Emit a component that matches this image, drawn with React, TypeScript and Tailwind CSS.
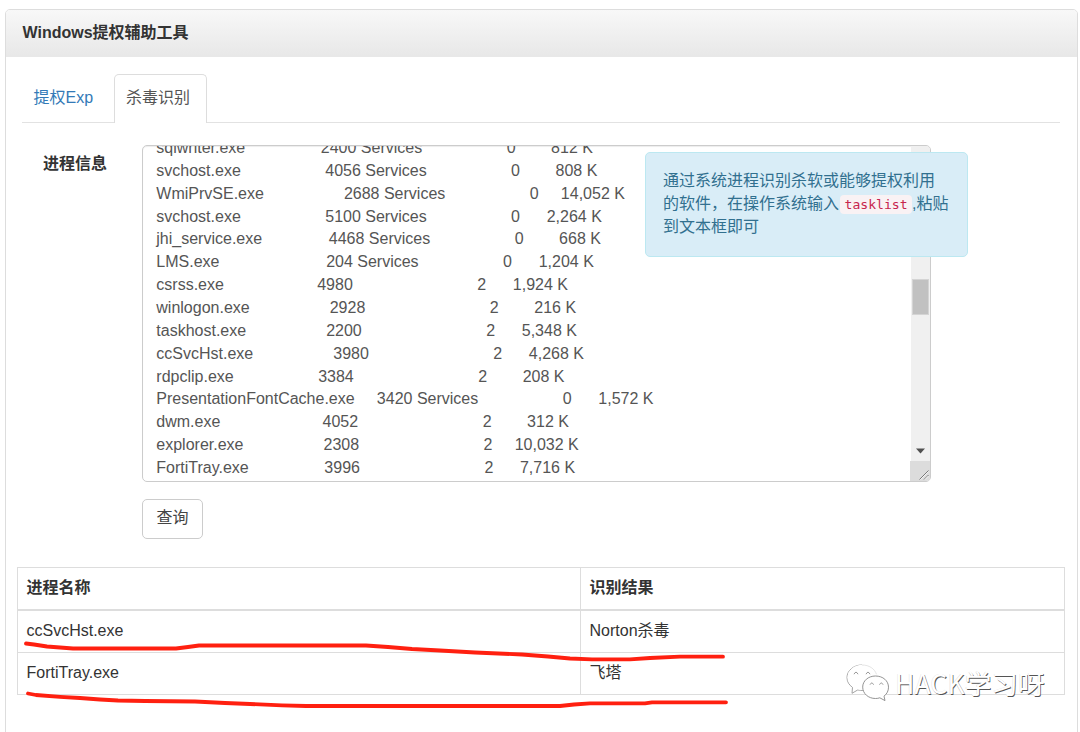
import React from 'react';

type Process = [name: string, pid: string, session: string, sessionId: string, memory: string];

const processes: Process[] = [
  ['sqlwriter.exe', '2400', 'Services', '0', '812 K'],
  ['svchost.exe', '4056', 'Services', '0', '808 K'],
  ['WmiPrvSE.exe', '2688', 'Services', '0', '14,052 K'],
  ['svchost.exe', '5100', 'Services', '0', '2,264 K'],
  ['jhi_service.exe', '4468', 'Services', '0', '668 K'],
  ['LMS.exe', '204', 'Services', '0', '1,204 K'],
  ['csrss.exe', '4980', '', '2', '1,924 K'],
  ['winlogon.exe', '2928', '', '2', '216 K'],
  ['taskhost.exe', '2200', '', '2', '5,348 K'],
  ['ccSvcHst.exe', '3980', '', '2', '4,268 K'],
  ['rdpclip.exe', '3384', '', '2', '208 K'],
  ['PresentationFontCache.exe', '3420', 'Services', '0', '1,572 K'],
  ['dwm.exe', '4052', '', '2', '312 K'],
  ['explorer.exe', '2308', '', '2', '10,032 K'],
  ['FortiTray.exe', '3996', '', '2', '7,716 K'],
];

// Column widths of the tasklist command's table output.
const formatProcess = ([name, pid, session, id, memory]: Process) =>
  [name.padEnd(25), pid.padStart(8), session.padEnd(16), id.padStart(11), memory.padStart(12)].join(' ');

const results = [
  ['ccSvcHst.exe', 'Norton杀毒'],
  ['FortiTray.exe', '飞塔'],
];

function Scrollbar() {
  return (
    <div className="flex w-[19px] shrink-0 flex-col bg-[#f0f0f0]">
      <div className="mx-px mt-[133px] h-9 border border-[#d4d4d4] bg-[#c1c1c1]" />
      <div className="flex flex-1 items-end justify-center pb-[7px]">
        <svg width="9" height="6" viewBox="0 0 9 6">
          <path d="M0 .5h9L4.5 5.5z" fill="#505050" />
        </svg>
      </div>
      <div className="-ml-px h-5 bg-[#dcdcdc]">
        <svg className="ml-auto" width="11" height="20" viewBox="0 0 11 20" fill="none" stroke="#777" strokeWidth="1">
          <path d="M.5 18.5l9-9M5 18.5l4.5-4.500" />
          <path d="M1.500 18.500l8-8M6 18.500l3.500-3.500" stroke="#f5f5f5" />
        </svg>
      </div>
    </div>
  );
}

function Notice() {
  return (
    <div className="absolute left-[503px] top-[7px] h-[105px] w-[323px] rounded-[5px] border border-[#bce8f1] bg-[#d9edf7] pl-[17px] pt-[17px] text-[#31708f]">
      <div className="whitespace-nowrap">通过系统进程识别杀软或能够提权利用</div>
      <div className="h-[22.86px] whitespace-nowrap">
        的软件，在操作系统输入
        <code className="ml-px rounded-[4px] bg-[#f9f2f4] px-[4.5px] py-[2px] font-['DejaVu_Sans_Mono',monospace] text-[13.1px] text-[#c7254e]">tasklist</code>
        ,粘贴
      </div>
      <div>到文本框即可</div>
    </div>
  );
}

function Watermark() {
  return (
    <div className="absolute left-[845px] top-[662px] flex items-center">
      <svg width="46" height="42" viewBox="0 0 46 42" fill="#fff">
        <path d="M17 3C8.500 3 2 8.700 2 15.500c0 4.300 2.200 7.500 5.500 9.900L7 31.300l5.800-3.400c2 .5 3.500.7 6 .4" stroke="#999" strokeWidth=".9" />
        <ellipse cx="17.500" cy="15.300" rx="15" ry="12.500" />
        <path d="M17 3c7 0 12.500 3.500 14.500 9.300" fill="none" stroke="#ddd" strokeWidth=".8" />
        <path d="M30.500 14c7.500 0 13 4.900 13 11.200 0 3.700-1.600 6.800-4.500 8.900l1 4.500-5.200-2.800c-1.300.5-2.600.7-4.300.7-7.300 0-12.800-5-12.800-11.400 0-6.200 5.500-11.100 12.800-11.100z" stroke="#888" strokeWidth=".9" />
        <path d="M9 12.200q2-4 4 0M21 12.200q2-4 4 0M25 22.700q1.800-3.500 3.600 0M34.500 22.700q1.800-3.500 3.600 0" fill="none" stroke="#999" strokeWidth="1" />
      </svg>
      <span className="ml-[4px] whitespace-nowrap font-['Noto_Sans_CJK_SC',sans-serif] text-[26.7px] font-normal leading-[42px] text-white [text-shadow:0.8px_0.8px_0.5px_#555,-0.3px_-0.3px_0_#ddd]">HACK学习呀</span>
    </div>
  );
}

export default function App() {
  return (
    <div className="relative h-[732px] w-[1080px] overflow-hidden bg-white pl-[5px] pt-[9px] font-['Liberation_Sans','Noto_Sans_CJK_SC',sans-serif] text-[16px] leading-[22.86px] text-[#333]">
      <div className="h-[760px] w-[1073px] rounded-[5px] border border-[#ddd] bg-white">
        <header className="flex h-[47px] items-center rounded-t-[4px] border-b border-[#e8e8e8] bg-linear-to-b from-[#f8f8f8] to-[#e8e8e8] pl-[16.5px] font-bold">
          Windows提权辅助工具
        </header>
        <nav className="ml-4 mr-[17px] mt-[17px] flex h-[49px] border-b border-[#e2e2e2]">
          <a className="w-[92px] pl-[11.5px] pt-[13px] text-[#337ab7]">提权Exp</a>
          <a className="h-[49px] w-[93px] rounded-t-[5px] border border-b-0 border-[#ddd] bg-white pl-[11px] pt-[12px] text-[#555]">杀毒识别</a>
        </nav>
        <div className="mt-[22px] flex">
          <label className="w-[136px] pl-[37px] pt-[8px] font-bold">进程信息</label>
          <div className="relative">
            <div className="flex h-[337px] w-[789px] overflow-hidden rounded-[5px] border border-[#ccc] shadow-[inset_0_1px_1px_rgba(0,0,0,0.075)]">
              <div className="min-w-0 flex-1 overflow-hidden pl-[13.3px] text-[#555]">
                <pre className="-mt-[9px] font-[inherit]">{processes.map(formatProcess).join('\n')}</pre>
              </div>
              <Scrollbar />
            </div>
            <Notice />
          </div>
        </div>
        <button className="ml-[136px] mt-[17px] block h-[40px] w-[61px] rounded-[5px] border border-[#ccc] bg-white pb-0.5 text-[#444]">查询</button>
        <table className="ml-[10.5px] mt-[28px] w-[1048px] table-fixed border-collapse text-left">
          <thead>
            <tr className="h-[42px]">
              <th className="w-[563px] border border-b-2 border-[#ddd] px-[9px]">进程名称</th>
              <th className="border border-b-2 border-[#ddd] px-[9px]">识别结果</th>
            </tr>
          </thead>
          <tbody>
            {results.map(([name, product]) => (
              <tr key={name} className="h-[42.500px]">
                <td className="border border-[#ddd] px-[9px]">{name}</td>
                <td className="border border-[#ddd] px-[9px]">{product}</td>
              </tr>
            ))}
          </tbody>
        </table>
      </div>
      <Watermark />
      <svg className="absolute left-0 top-0" width="1080" height="732" viewBox="0 0 1080 732" fill="none" stroke="#ff2010" strokeWidth="3.800" strokeLinecap="round" strokeLinejoin="round">
        <path d="M26 643.500L34 644.500L47 646.500L60 647.500L73 648.500H176L188 647L199 645.500H366L388 647L412 649L440 650.500L475 652.500L522 654.500L548 656.500L570 658.500L592 659.300H630L650 658L680 656.700H723" />
        <path d="M28 693.500L36 695L60 696.800L80 698L100 699.500L118 700.500L145 701L195 701.500L225 703L250 704L282 705.300L306 706H560L574 704.500L590 703.300H645L652 702.300H726" />
      </svg>
    </div>
  );
}
